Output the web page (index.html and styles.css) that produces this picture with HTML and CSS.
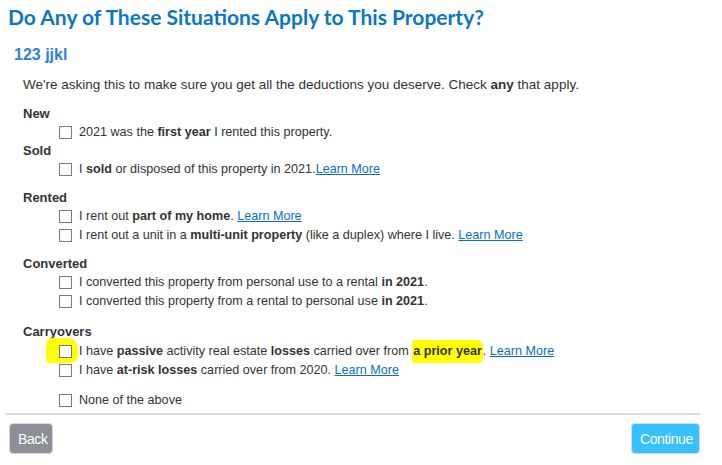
FILE: index.html
```html
<!DOCTYPE html>
<html lang="en">
<head>
<meta charset="UTF-8">
<meta name="viewport" content="width=device-width, initial-scale=1.0">
<title>Property Situations</title>
<link rel="stylesheet" href="styles.css">
</head>
<body>
<h1 class="title">Do Any of These Situations Apply to This Property?</h1>
<h2 class="property">123 jjkl</h2>
<p class="intro">We're asking this to make sure you get all the deductions you deserve. Check <b>any</b> that apply.</p>

<div class="group tight">
  <div class="label">New</div>
  <div class="item"><span class="box"></span>2021 was the <b>first year</b> I rented this property.</div>
</div>
<div class="group">
  <div class="label">Sold</div>
  <div class="item"><span class="box"></span>I <b>sold</b> or disposed of this property in 2021.<a href="#">Learn More</a></div>
</div>
<div class="group">
  <div class="label">Rented</div>
  <div class="item"><span class="box"></span>I rent out <b>part of my home</b>. <a href="#">Learn More</a></div>
  <div class="item"><span class="box"></span>I rent out a unit in a <b>multi-unit property</b> (like a duplex) where I live. <a href="#">Learn More</a></div>
</div>
<div class="group">
  <div class="label">Converted</div>
  <div class="item"><span class="box"></span>I converted this property from personal use to a rental <b>in 2021</b>.</div>
  <div class="item"><span class="box"></span>I converted this property from a rental to personal use <b>in 2021</b>.</div>
</div>
<div class="group wide">
  <div class="label">Carryovers</div>
  <div class="item first"><span class="marker"></span><span class="box"></span>I have <b>passive</b> activity real estate <b>losses</b> carried over from <span class="hl"><b>a prior year</b></span>. <a href="#">Learn More</a></div>
  <div class="item"><span class="box"></span>I have <b>at-risk losses</b> carried over from 2020. <a href="#">Learn More</a></div>
</div>
<div class="group wide">
  <div class="item"><span class="box"></span>None of the above</div>
</div>

<div class="footer">
  <button type="button" class="btn back">Back</button>
  <button type="button" class="btn continue">Continue</button>
</div>
</body>
</html>
```

FILE: styles.css
```css
body {
  font-family: 'Liberation Sans', Arial, sans-serif;
  font-size: 13px;
  color: #333;
  background-color: #ffffff;
  margin: 0;
  padding: 0;
}
.title {
  font-family: 'Lato', 'Liberation Sans', sans-serif;
  font-size: 21px;
  font-weight: bold;
  color: #0a77c6;
  margin: 0;
  padding: 4px 0 0 8px;
  line-height: 26px;
}
.property {
  font-size: 16px;
  font-weight: bold;
  color: #2d82d9;
  margin: 0;
  padding: 15px 0 0 14px;
  line-height: 20px;
}
.intro {
  margin: 0;
  padding: 10px 0 0 23px;
  font-size: 13.5px;
  line-height: 19px;
}
.group {
  padding-left: 23px;
  margin-top: 9px;
}
.group.tight {
  margin-top: 10px;
}
.group.tight + .group {
  margin-top: -1px;
}
.group.wide {
  margin-top: 11px;
}
.label {
  font-weight: bold;
  font-size: 13px;
  line-height: 19px;
  height: 19px;
}
.item {
  position: relative;
  display: flex;
  align-items: center;
  padding-left: 36px;
  font-size: 12.6px;
  line-height: 19px;
  height: 19px;
  white-space: pre;
}
.item.first {
  margin-top: 1px;
}
.box {
  width: 11px;
  height: 11px;
  border: 1px solid #7a7a7a;
  background-color: #fff;
  margin-right: 7px;
  position: relative;
  z-index: 1;
}
.marker {
  position: absolute;
  left: 23px;
  top: -4px;
  width: 32px;
  height: 25px;
  background-color: #ffff00;
  border-radius: 6px 10px 8px 4px;
}
.hl {
  background-color: #ffff00;
  border-radius: 3px 6px 5px 3px;
  padding: 2px 1px;
}
a {
  color: #0a6fc2;
  text-decoration: underline;
}
.footer {
  margin: 3px 22px 0 5px;
  border-top: 2px solid #dddddd;
  padding: 8px 0 0 4px;
  display: flex;
  justify-content: space-between;
}
.btn {
  font-family: 'Liberation Sans', Arial, sans-serif;
  font-size: 14px;
  letter-spacing: -0.4px;
  color: #ffffff;
  border: 1px solid #d8d8d8;
  border-radius: 4px;
  height: 31px;
  padding: 0 8px;
}
.back {
  background-color: #8c9096;
  width: 44px;
}
.continue {
  background-color: #36c0fc;
  width: 69px;
}
```
